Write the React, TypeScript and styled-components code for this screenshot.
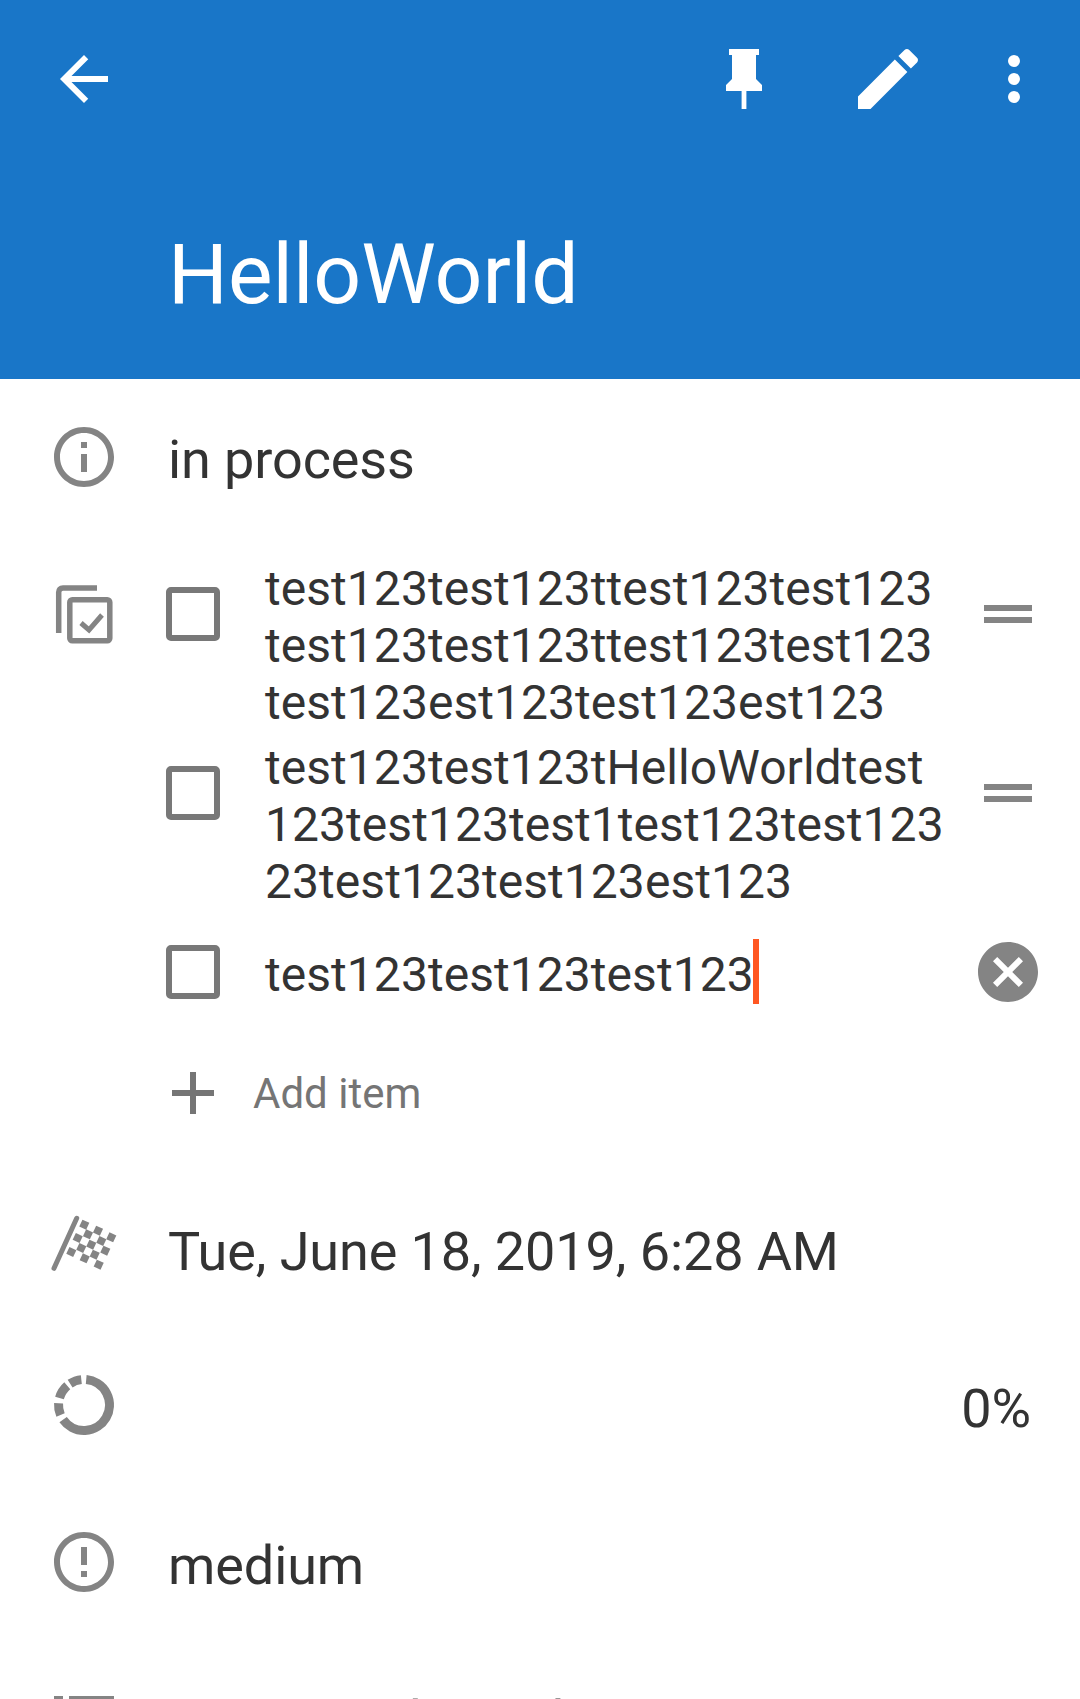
import { createGlobalStyle, styled } from "styled-components";

const ICON = "#848484";
const TEXT = "#333333";

const GlobalStyle = createGlobalStyle`
  html, body {
    margin: 0;
    height: 1699px;
    overflow: hidden;
    background: #fff;
    font-family: Roboto, "Liberation Sans", sans-serif;
    color: ${TEXT};
  }
`;

const arc = (from: number, to: number) => {
  const point = (deg: number) => {
    const a = (deg * Math.PI) / 180;
    return `${36 + 25.5 * Math.sin(a)} ${36 - 25.5 * Math.cos(a)}`;
  };
  return `M${point(from)}A25.5 25.5 0 ${to - from > 180 ? 1 : 0} 1 ${point(to)}`;
};

const checks = [
  [36.3, 16.7], [50, 22.7], [63.3, 29.3], [40, 26.3], [53.3, 33], [29.7, 30], [43.3, 36.7],
  [57.3, 42.7], [33.3, 40], [46.7, 46.7], [23.3, 44], [36.7, 50.3], [50.7, 56.7],
];

type IconProps = { size?: number };

const Glyph = ({ d, size = 72 }: IconProps & { d: string }) => (
  <svg width={size} height={size} viewBox="0 0 24 24" fill="currentColor">
    <path d={d} />
  </svg>
);

const BackIcon = () => <Glyph d="M20 11H7.83l5.59-5.59L12 4l-8 8 8 8 1.41-1.41L7.83 13H20v-2z" />;
const PinIcon = () => <Glyph d="M16 12V4h1V2H7v2h1v8l-2 2v2h5.2v6h1.6v-6H18v-2l-2-2z" />;
const PencilIcon = () => (
  <Glyph
    size={80}
    d="M20.71 7.04c.39-.39.39-1.04 0-1.41l-2.34-2.34c-.37-.39-1.02-.39-1.41 0l-1.84 1.83 3.75 3.75M3 17.25V21h3.75L17.81 9.93l-3.75-3.75L3 17.25z"
  />
);
const DotsIcon = () => (
  <Glyph d="M12 16a2 2 0 1 1 0 4 2 2 0 0 1 0-4zm0-6a2 2 0 1 1 0 4 2 2 0 0 1 0-4zm0-6a2 2 0 1 1 0 4 2 2 0 0 1 0-4z" />
);
const InfoIcon = () => (
  <Glyph d="M11 7h2v2h-2zm0 4h2v6h-2zm1-9C6.48 2 2 6.48 2 12s4.48 10 10 10 10-4.48 10-10S17.52 2 12 2zm0 18c-4.41 0-8-3.59-8-8s3.59-8 8-8 8 3.59 8 8-3.59 8-8 8z" />
);
const PriorityIcon = () => (
  <Glyph d="M11 15h2v2h-2zm0-8h2v6h-2zm.99-5C6.47 2 2 6.48 2 12s4.47 10 9.99 10C17.52 22 22 17.52 22 12S17.52 2 11.99 2zM12 20c-4.42 0-8-3.58-8-8s3.58-8 8-8 8 3.58 8 8-3.58 8-8 8z" />
);
const ClearIcon = () => (
  <Glyph d="M12 2C6.47 2 2 6.47 2 12s4.47 10 10 10 10-4.47 10-10S17.53 2 12 2zm5 13.59L15.59 17 12 13.41 8.41 17 7 15.59 10.59 12 7 8.41 8.41 7 12 10.59 15.59 7 17 8.41 13.41 12 17 15.59z" />
);
const PlusIcon = () => <Glyph d="M19 13h-6v6h-2v-6H5v-2h6V5h2v6h6v2z" />;
const ListIcon = () => <Glyph d="M2 5h3v3H2zm5 0h15v3H7zM2 11h3v3H2zm5 0h15v3H7zM2 17h3v3H2zm5 0h15v3H7z" />;

const ChecklistIcon = () => (
  <svg width={72} height={72} viewBox="0 0 72 72" fill="none" stroke="currentColor" strokeWidth={5.5}>
    <path d="M49 10H15q-4.300 0-4.300 4.300V55" />
    <rect x="21.800" y="21.800" width="40" height="41" rx="2.500" />
    <path d="M33 45l8 7 13-15" strokeWidth={5} />
  </svg>
);

const FlagIcon = () => (
  <svg width={72} height={72} viewBox="0 0 72 72" fill="currentColor">
    <path d="M6 60.300L28.700 10.300" stroke="currentColor" strokeWidth={5} strokeLinecap="round" />
    {checks.map(([x, y]) => (
      <rect key={`${x}-${y}`} x={x - 3.8} y={y - 3.8} width={7.6} height={7.6} transform={`rotate(25 ${x} ${y})`} />
    ))}
  </svg>
);

const ProgressIcon = () => (
  <svg width={72} height={72} viewBox="0 0 72 72" fill="none" stroke="currentColor" strokeWidth={9}>
    <path d={arc(5, 235)} />
    <path d={arc(247, 274)} />
    <path d={arc(286, 319)} />
    <path d={arc(327, 354)} />
  </svg>
);

const Header = styled.header`
  height: 379px;
  box-sizing: border-box;
  background: #1976c8;
  color: #fff;
  padding: 39px 30px 0 48px;
`;

const Toolbar = styled.div`
  display: flex;
  align-items: center;
  height: 80px;
`;

const ToolButton = styled.div<{ $gap?: number }>`
  display: flex;
  margin-left: ${(p) => p.$gap ?? 0}px;
`;

const Title = styled.h1`
  margin: 106px 0 0 120px;
  font-size: 84px;
  font-weight: 400;
  line-height: 100px;
`;

const Row = styled.div<{ $height: number }>`
  display: grid;
  grid-template-columns: 72px 1fr;
  column-gap: 48px;
  align-items: center;
  height: ${(p) => p.$height}px;
  padding-left: 48px;
`;

const RowIcon = styled.div`
  display: flex;
  color: ${ICON};
`;

const RowText = styled.div<{ $drop: number }>`
  padding-top: ${(p) => p.$drop}px;
  font-size: 54px;
  line-height: 64px;
  letter-spacing: -0.1px;
  white-space: nowrap;
`;

const Percent = styled(RowText)`
  text-align: right;
  padding-right: 49px;
`;

const Checklist = styled.section`
  display: grid;
  grid-template-columns: 72px 1fr;
  padding: 25px 0 0 48px;
`;

const ChecklistGlyph = styled(RowIcon)`
  align-self: start;
  margin-top: 18px;
`;

const Items = styled.div`
  display: flex;
  flex-direction: column;
  gap: 8px;
`;

const Item = styled.div<{ $single?: boolean }>`
  display: grid;
  grid-template-columns: 145px 680px 1fr;
  align-items: start;
  min-height: ${(p) => (p.$single ? 112 : 0)}px;
`;

const Box = styled.div`
  box-sizing: border-box;
  width: 54px;
  height: 54px;
  margin: 27px 0 0 46px;
  border: 6px solid #787878;
  border-radius: 5px;
`;

const ItemText = styled.div`
  font-size: 48px;
  line-height: 57px;
  letter-spacing: 0.05px;
  overflow-wrap: anywhere;
`;

const Editing = styled(ItemText)`
  display: flex;
  align-items: center;
  height: 112px;
`;

const Caret = styled.span`
  width: 6px;
  height: 65px;
  margin: -6px 0 0 -1px;
  background: #ff5722;
`;

const Handle = styled.div`
  display: flex;
  flex-direction: column;
  gap: 6px;
  width: 48px;
  margin: 45px 0 0 39px;
  &::before,
  &::after {
    content: "";
    height: 6px;
    background: ${ICON};
  }
`;

const ClearButton = styled.div`
  display: flex;
  margin: 18px 0 0 27px;
  color: ${ICON};
`;

const AddRow = styled.div`
  display: flex;
  align-items: center;
  height: 110px;
  padding-bottom: 18px;
  color: #757575;
  font-size: 42px;
`;

const AddIcon = styled.div`
  display: flex;
  margin-right: 24px;
  margin-left: 37px;
`;

export default function App() {
  return (
    <>
      <GlobalStyle />
      <Header>
        <Toolbar>
          <ToolButton><BackIcon /></ToolButton>
          <ToolButton $gap={588}><PinIcon /></ToolButton>
          <ToolButton $gap={68}><PencilIcon /></ToolButton>
          <ToolButton $gap={50}><DotsIcon /></ToolButton>
        </Toolbar>
        <Title>HelloWorld</Title>
      </Header>
      <Row $height={156}>
        <RowIcon><InfoIcon /></RowIcon>
        <RowText $drop={6}>in process</RowText>
      </Row>
      <Checklist>
        <ChecklistGlyph><ChecklistIcon /></ChecklistGlyph>
        <Items>
          <Item>
            <Box />
            <ItemText>test123test123ttest123test123 test123test123ttest123test123 test123est123test123est123</ItemText>
            <Handle />
          </Item>
          <Item>
            <Box />
            <ItemText>test123test123tHelloWorldtest123test123test1test123test123 23test123test123est123</ItemText>
            <Handle />
          </Item>
          <Item $single>
            <Box />
            <Editing>test123test123test123<Caret /></Editing>
            <ClearButton><ClearIcon /></ClearButton>
          </Item>
          <AddRow>
            <AddIcon><PlusIcon /></AddIcon>
            Add item
          </AddRow>
        </Items>
      </Checklist>
      <Row $height={156}>
        <RowIcon><FlagIcon /></RowIcon>
        <RowText $drop={15}>Tue, June 18, 2019, 6:28 AM</RowText>
      </Row>
      <Row $height={165}>
        <RowIcon><ProgressIcon /></RowIcon>
        <Percent $drop={8}>0%</Percent>
      </Row>
      <Row $height={149}>
        <RowIcon><PriorityIcon /></RowIcon>
        <RowText $drop={8}>medium</RowText>
      </Row>
      <Row $height={162}>
        <RowIcon><ListIcon /></RowIcon>
        <RowText $drop={8}>Someone lists ok</RowText>
      </Row>
    </>
  );
}
